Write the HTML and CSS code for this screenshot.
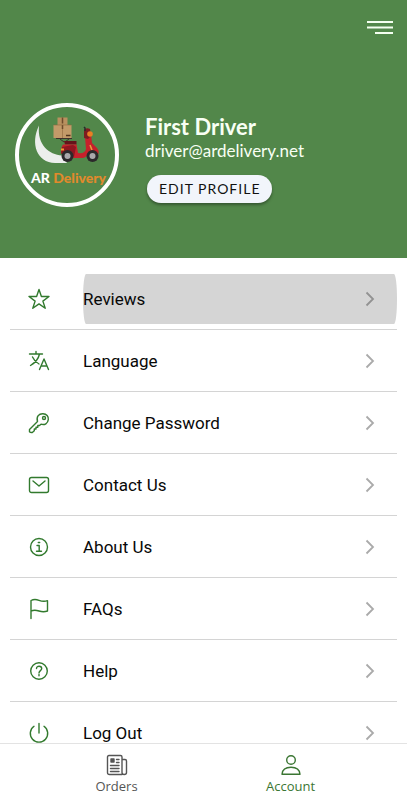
FILE: index.html
```html
<!DOCTYPE html>
<html lang="en">
<head>
<meta charset="utf-8">
<meta name="viewport" content="width=device-width, initial-scale=1">
<title>Account</title>
<link rel="stylesheet" href="styles.css">
</head>
<body>
<header class="hero">
  <button class="menu" type="button" aria-label="Menu">
    <svg width="26" height="14" viewBox="0 0 26 14"><path d="M0 1h26M0 6.500h26M8 12h18" stroke="#f4fff0" stroke-width="1.900"/></svg>
  </button>
  <div class="profile">
    <svg class="logo" viewBox="0 0 104 104" role="img" aria-label="AR Delivery">
      <circle cx="52" cy="52" r="50" fill="none" stroke="#fff" stroke-width="4"/>
      <path d="M24 22.500C15 41 22 59.500 40 60H52L47 52.500C34 51.500 22 42 24 22.500z" fill="#eceeec"/>
      <path d="M41 35.500h16M45 36l4 3M54 36l-4 3" stroke="#3d302b" stroke-width="1"/>
      <path d="M42.500 14.500h10V22h-10z" fill="#b9905f"/>
      <path d="M38.500 22h18v13h-18z" fill="#c39a69"/>
      <path d="M47.500 14.500v6M47.500 22v4" stroke="#6e4a2b" stroke-width="1.500"/>
      <path d="M38.500 22h18M47.500 26v9" stroke="#8e663d" stroke-width=".6"/>
      <path d="M51 32.500h4.500" stroke="#51341d" stroke-width="1.500"/>
      <path d="M49 38h12.500v3.500H50z" fill="#65131b"/>
      <path d="M48 41.500h13.500L63 50q7 1 8-4l-1-12 2-4 4 1 1 9 5 5q2 2 1.500 6H73q-2 4-6 4H56l-1-5-8 1-1-3q0-4 2-6.500z" fill="#c6212b"/>
      <path d="M47 44l11-2 3 2-2 10-5-5-8 2z" fill="#8f1720"/>
      <path d="M46 46.500h3" stroke="#ef9b2d" stroke-width="2"/>
      <path d="M75 42l2 5" stroke="#e8a23a" stroke-width="1.500"/>
      <path d="M69 27q2-3 6-1l1 7-3 3-4-1z" fill="#7d1c20"/>
      <path d="M70 28v-3l-1-1" fill="none" stroke="#292b2b" stroke-width="1.500"/>
      <circle cx="75" cy="31" r="2.800" fill="#e97f24"/>
      <circle cx="52.500" cy="53" r="6" fill="#2c292b"/><circle cx="52.500" cy="53" r="3" fill="#a9a8ab"/>
      <circle cx="77.500" cy="53" r="6" fill="#2c292b"/><circle cx="77.500" cy="53" r="3" fill="#a9a8ab"/>
      <text x="16" y="80" class="logo-text">AR <tspan class="logo-accent">Delivery</tspan></text>
    </svg>
    <div class="identity">
      <h1>First Driver</h1>
      <p>driver@ardelivery.net</p>
      <button class="edit" type="button">EDIT PROFILE</button>
    </div>
  </div>
</header>
<main class="content">
  <ul class="list">
    <li><a class="row active" href="#reviews">
      <svg class="icon" viewBox="0 0 22 22"><path d="M11 1.500l2.400 7H21l-6.100 4.600 2.300 7.200-6.200-4.400-6.200 4.400 2.300-7.200L1 8.500h7.600z"/></svg>
      <span class="label">Reviews<svg class="chevron" viewBox="0 0 10 16"><path d="M1.500 1.500L8 8l-6.500 6.500"/></svg></span></a></li>
    <li><a class="row" href="#language">
      <svg class="icon" viewBox="0 0 22 22"><path d="M1.500 4h13M8 1.500V4M11.500 4Q10 11 2.500 15.500M4.500 7Q6.500 11.500 11 14M11.500 19.500L16 9l4.500 10.500M13 16h6"/></svg>
      <span class="label">Language<svg class="chevron" viewBox="0 0 10 16"><path d="M1.500 1.500L8 8l-6.500 6.500"/></svg></span></a></li>
    <li><a class="row" href="#password">
      <svg class="icon" viewBox="0 0 22 22"><path d="M9.500 9.500C8 4.500 11 1.500 15 1.700c3.500.1 5.800 2.800 5.300 6-.5 3.800-3.600 5.600-7.300 4.500l-1.500 1.300H9.800v1.700H8v1.800H6.300v1.700l-2 1.800q-1.800.3-2.800-.8v-2.200z"/><circle cx="16" cy="6" r="1.500"/></svg>
      <span class="label">Change Password<svg class="chevron" viewBox="0 0 10 16"><path d="M1.500 1.500L8 8l-6.500 6.500"/></svg></span></a></li>
    <li><a class="row" href="#contact">
      <svg class="icon" viewBox="0 0 22 22"><rect x="1.500" y="3.500" width="19" height="15" rx="2"/><path d="M5 7l6 5 6-5"/></svg>
      <span class="label">Contact Us<svg class="chevron" viewBox="0 0 10 16"><path d="M1.500 1.500L8 8l-6.500 6.500"/></svg></span></a></li>
    <li><a class="row" href="#about">
      <svg class="icon" viewBox="0 0 22 22"><circle cx="11" cy="11" r="8.500"/><path d="M9 9.500h2.200V15M8.500 15.200h5M10.300 6.500h1.400"/></svg>
      <span class="label">About Us<svg class="chevron" viewBox="0 0 10 16"><path d="M1.500 1.500L8 8l-6.500 6.500"/></svg></span></a></li>
    <li><a class="row" href="#faqs">
      <svg class="icon" viewBox="0 0 22 22"><path d="M3 20.500V2.500Q6.500.500 11 2.300t8.500.4V13q-4 1.500-8.500 0T3 13"/></svg>
      <span class="label">FAQs<svg class="chevron" viewBox="0 0 10 16"><path d="M1.500 1.500L8 8l-6.500 6.500"/></svg></span></a></li>
    <li><a class="row" href="#help">
      <svg class="icon" viewBox="0 0 22 22"><circle cx="11" cy="11" r="8.300"/><path d="M8.500 8.500c0-3 5.200-3 5.200.1 0 2-2.700 2.100-2.700 4.300M11 14.500v1.300"/></svg>
      <span class="label">Help<svg class="chevron" viewBox="0 0 10 16"><path d="M1.500 1.500L8 8l-6.500 6.500"/></svg></span></a></li>
    <li><a class="row" href="#logout">
      <svg class="icon" viewBox="0 0 22 22"><path d="M11 1.500V11M6 4.300a8.700 8.700 0 1 0 10 0"/></svg>
      <span class="label">Log Out<svg class="chevron" viewBox="0 0 10 16"><path d="M1.500 1.500L8 8l-6.500 6.500"/></svg></span></a></li>
  </ul>
</main>
<nav class="tabs">
  <a class="tab" href="#orders">
    <svg class="icon" viewBox="0 0 22 22"><path d="M16 20.500H3.500q-2 0-2-2V3q0-1.500 1.500-1.500h11.500Q16 1.500 16 3v15.500q0 2 2.200 2 2.300 0 2.300-2V7q0-1.500-1.500-1.500h-3M10.500 5.500H13M10.500 8.500H13M4.500 11.500H13M4.500 14.500H13M4.500 17.500H13"/><path d="M5 5h3v3H5z" fill="currentColor"/></svg>
    <span>Orders</span></a>
  <a class="tab selected" href="#account" aria-current="page">
    <svg class="icon" viewBox="0 0 22 22"><circle cx="11" cy="6" r="4.300"/><path d="M2 20.300q.6-7 9-7t9 7z"/></svg>
    <span>Account</span></a>
</nav>
</body>
</html>
```

FILE: styles.css
```css
* {
  box-sizing: border-box;
}

body {
  margin: 0;
  height: 100vh;
  display: flex;
  flex-direction: column;
  background: #fff;
  color: #080808;
  font-family: Roboto, sans-serif;
}

a {
  color: inherit;
  text-decoration: none;
}

button {
  border: 0;
  cursor: pointer;
}

.hero {
  flex: none;
  display: flex;
  flex-direction: column;
  gap: 68px;
  padding: 21px 14px 51px 15px;
  background: #52874a;
  color: #f8fff4;
}

.menu {
  align-self: flex-end;
  display: flex;
  padding: 0;
  background: none;
}

.profile {
  display: flex;
  align-items: center;
  gap: 26px;
}

.logo {
  flex: none;
  width: 104px;
  height: 104px;
}

.logo-text {
  font: 900 14px Lato, sans-serif;
  fill: #fff;
}

.logo-accent {
  fill: #e18a2c;
}

.identity {
  padding-top: 8px;
  font-family: Lato, sans-serif;
}

.identity h1 {
  margin: 0;
  font-size: 22px;
  line-height: 24px;
  font-weight: 700;
}

.identity p {
  margin: 0 0 12px;
  font-size: 17px;
  line-height: 24px;
}

.edit {
  display: block;
  margin-left: 2px;
  padding: 0 12px;
  border-radius: 14px;
  background: #f2f5fb;
  box-shadow: 0 2px 3px rgba(0, 0, 0, 0.35);
  color: #111;
  font-family: Lato, sans-serif;
  font-size: 14px;
  line-height: 28px;
  letter-spacing: 1px;
}

.content {
  flex: 1;
  min-height: 0;
  overflow: hidden;
}

.list {
  margin: 0;
  padding: 10px 10px 0;
  list-style: none;
}

.list li {
  border-bottom: 1px solid #d4d4d4;
}

.row {
  display: flex;
  align-items: center;
  gap: 33px;
  height: 61px;
  padding-left: 18px;
  font-size: 17px;
  color: #080808;
}

.icon {
  flex: none;
  width: 22px;
  height: 22px;
  fill: none;
  stroke: currentColor;
  stroke-width: 1.4;
  stroke-linejoin: round;
  stroke-linecap: round;
}

.row .icon {
  color: #327a2e;
}

.label {
  flex: 1;
  display: flex;
  align-items: center;
  justify-content: space-between;
  height: 50px;
  padding-right: 22px;
}

.active .label {
  background: #d5d5d5;
  border-radius: 3px / 25px;
}

.chevron {
  width: 10px;
  height: 16px;
  fill: none;
  stroke: #aaa;
  stroke-width: 1.8;
}

.active .chevron {
  stroke: #929292;
}

.tabs {
  flex: none;
  display: flex;
  justify-content: center;
  height: 57px;
  border-top: 1px solid #e3e3e3;
  background: #fff;
}

.tab {
  flex: 0 1 174px;
  display: flex;
  flex-direction: column;
  align-items: center;
  gap: 1px;
  padding-top: 10px;
  color: #555;
  font-family: "Open Sans", sans-serif;
  font-size: 13px;
  line-height: 18px;
}

.tab.selected {
  color: #3b7633;
}
```
